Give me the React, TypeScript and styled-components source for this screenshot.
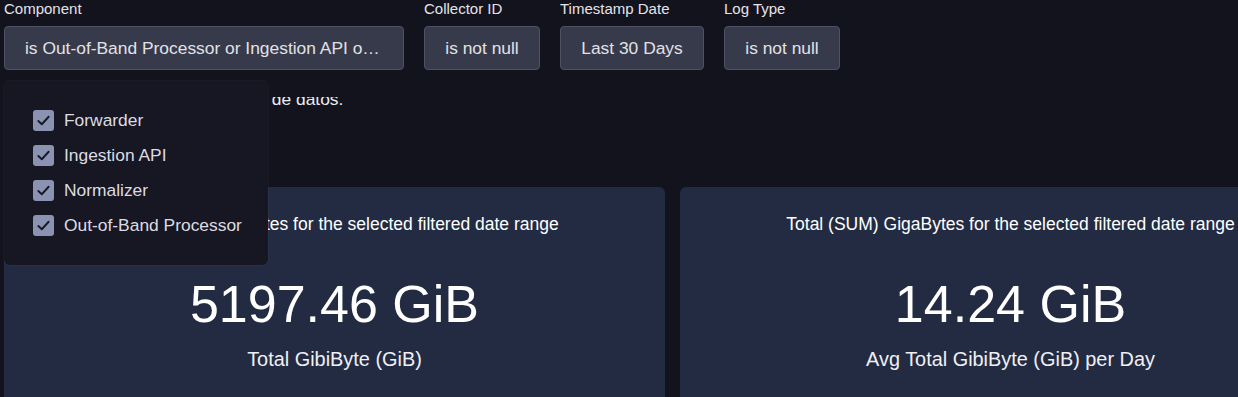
import React from 'react';
import styled, { createGlobalStyle } from 'styled-components';

const GlobalStyle = createGlobalStyle`
  html, body {
    margin: 0;
    padding: 0;
    background: #13131e;
    overflow: hidden;
  }
  body {
    font-family: "Liberation Sans", Arial, sans-serif;
    color: #e6e6ea;
  }
`;

// Page wrapper
const Page = styled.div`
  position: relative;
  padding: 0 0 0 4px;
  width: 1400px;
`;

// Filter bar across the top
const FilterBar = styled.div`
  display: flex;
  gap: 20px;
`;

const FilterGroup = styled.div`
  position: relative;
  display: flex;
  flex-direction: column;
  gap: 8px;
`;

const FilterLabel = styled.div`
  font-size: 15px;
  line-height: 18px;
  color: #e4e4e8;
`;

const FilterButton = styled.button<{ $width: number }>`
  box-sizing: border-box;
  height: 44px;
  width: ${(p) => p.$width}px;
  padding: 0 20px;
  background: #373a4b;
  border: 1px solid #4e5164;
  border-radius: 4px;
  color: #e2e2e6;
  font-family: inherit;
  font-size: 17.4px;
  white-space: nowrap;
  overflow: hidden;
  text-overflow: ellipsis;
  text-align: center;
`;

// Dropdown with component checkboxes
const Dropdown = styled.div`
  position: absolute;
  top: 81px;
  left: 0;
  z-index: 10;
  box-sizing: border-box;
  width: 264px;
  padding: 29px 0 29px 29px;
  background: #171723;
  border-radius: 6px;
  box-shadow: 0 0 0 1px rgba(255, 255, 255, 0.03);
  display: flex;
  flex-direction: column;
  gap: 14px;
`;

const Option = styled.label`
  display: flex;
  align-items: center;
  gap: 10px;
  height: 21px;
  font-size: 17.4px;
  color: #dcdce2;
  white-space: nowrap;
`;

const Box = styled.span`
  width: 21px;
  height: 21px;
  border-radius: 3px;
  background: #8a93b1;
  display: flex;
  align-items: center;
  justify-content: center;
  flex-shrink: 0;
`;

// Description line, partly scrolled under the filter bar
const Description = styled.div`
  margin-top: 27px;
  height: 12px;
  overflow: hidden;
  font-size: 17.4px;
  line-height: 4px;
  color: #ececf0;
  white-space: nowrap;
`;

const Cards = styled.div`
  display: grid;
  grid-template-columns: 661px 661px;
  gap: 15px;
  margin-top: 78px;
`;

const Card = styled.div`
  height: 240px;
  padding-top: 27px;
  box-sizing: border-box;
  background: #222b42;
  border-radius: 6px;
  display: flex;
  flex-direction: column;
  align-items: center;
  color: #ffffff;
`;

const CardTitle = styled.div`
  font-size: 17.5px;
  line-height: 20px;
  white-space: nowrap;
`;

const BigValue = styled.div`
  margin-top: 40px;
  font-size: 52px;
  line-height: 60px;
`;

const Caption = styled.div`
  margin-top: 13px;
  font-size: 19.9px;
  line-height: 24px;
  color: #f0f0f4;
`;

const CheckIcon = () => (
  <svg width="15" height="15" viewBox="0 0 16 16" fill="none">
    <polyline points="2.5 8.5 6.2 12 13.5 4" stroke="#181826" strokeWidth="2" strokeLinecap="round" strokeLinejoin="round" />
  </svg>
);

const components = ['Forwarder', 'Ingestion API', 'Normalizer', 'Out-of-Band Processor'];

export default function App() {
  return (
    <>
      <GlobalStyle />
      <Page>
        <FilterBar>
          <FilterGroup>
            <FilterLabel>Component</FilterLabel>
            <FilterButton $width={400}>is Out-of-Band Processor or Ingestion API or Normalizer or Forwarder</FilterButton>
            <Dropdown>
              {components.map((c) => (
                <Option key={c}>
                  <Box>
                    <CheckIcon />
                  </Box>
                  {c}
                </Option>
              ))}
            </Dropdown>
          </FilterGroup>
          <FilterGroup>
            <FilterLabel>Collector ID</FilterLabel>
            <FilterButton $width={116}>is not null</FilterButton>
          </FilterGroup>
          <FilterGroup>
            <FilterLabel>Timestamp Date</FilterLabel>
            <FilterButton $width={144}>Last 30 Days</FilterButton>
          </FilterGroup>
          <FilterGroup>
            <FilterLabel>Log Type</FilterLabel>
            <FilterButton $width={116}>is not null</FilterButton>
          </FilterGroup>
        </FilterBar>

        <Description>Resumen del consumo de ingesta de datos.</Description>

        <Cards>
          <Card>
            <CardTitle>Total (SUM) GigaBytes for the selected filtered date range</CardTitle>
            <BigValue>5197.46 GiB</BigValue>
            <Caption>Total GibiByte (GiB)</Caption>
          </Card>
          <Card>
            <CardTitle>Total (SUM) GigaBytes for the selected filtered date range</CardTitle>
            <BigValue>14.24 GiB</BigValue>
            <Caption>Avg Total GibiByte (GiB) per Day</Caption>
          </Card>
        </Cards>
      </Page>
    </>
  );
}
